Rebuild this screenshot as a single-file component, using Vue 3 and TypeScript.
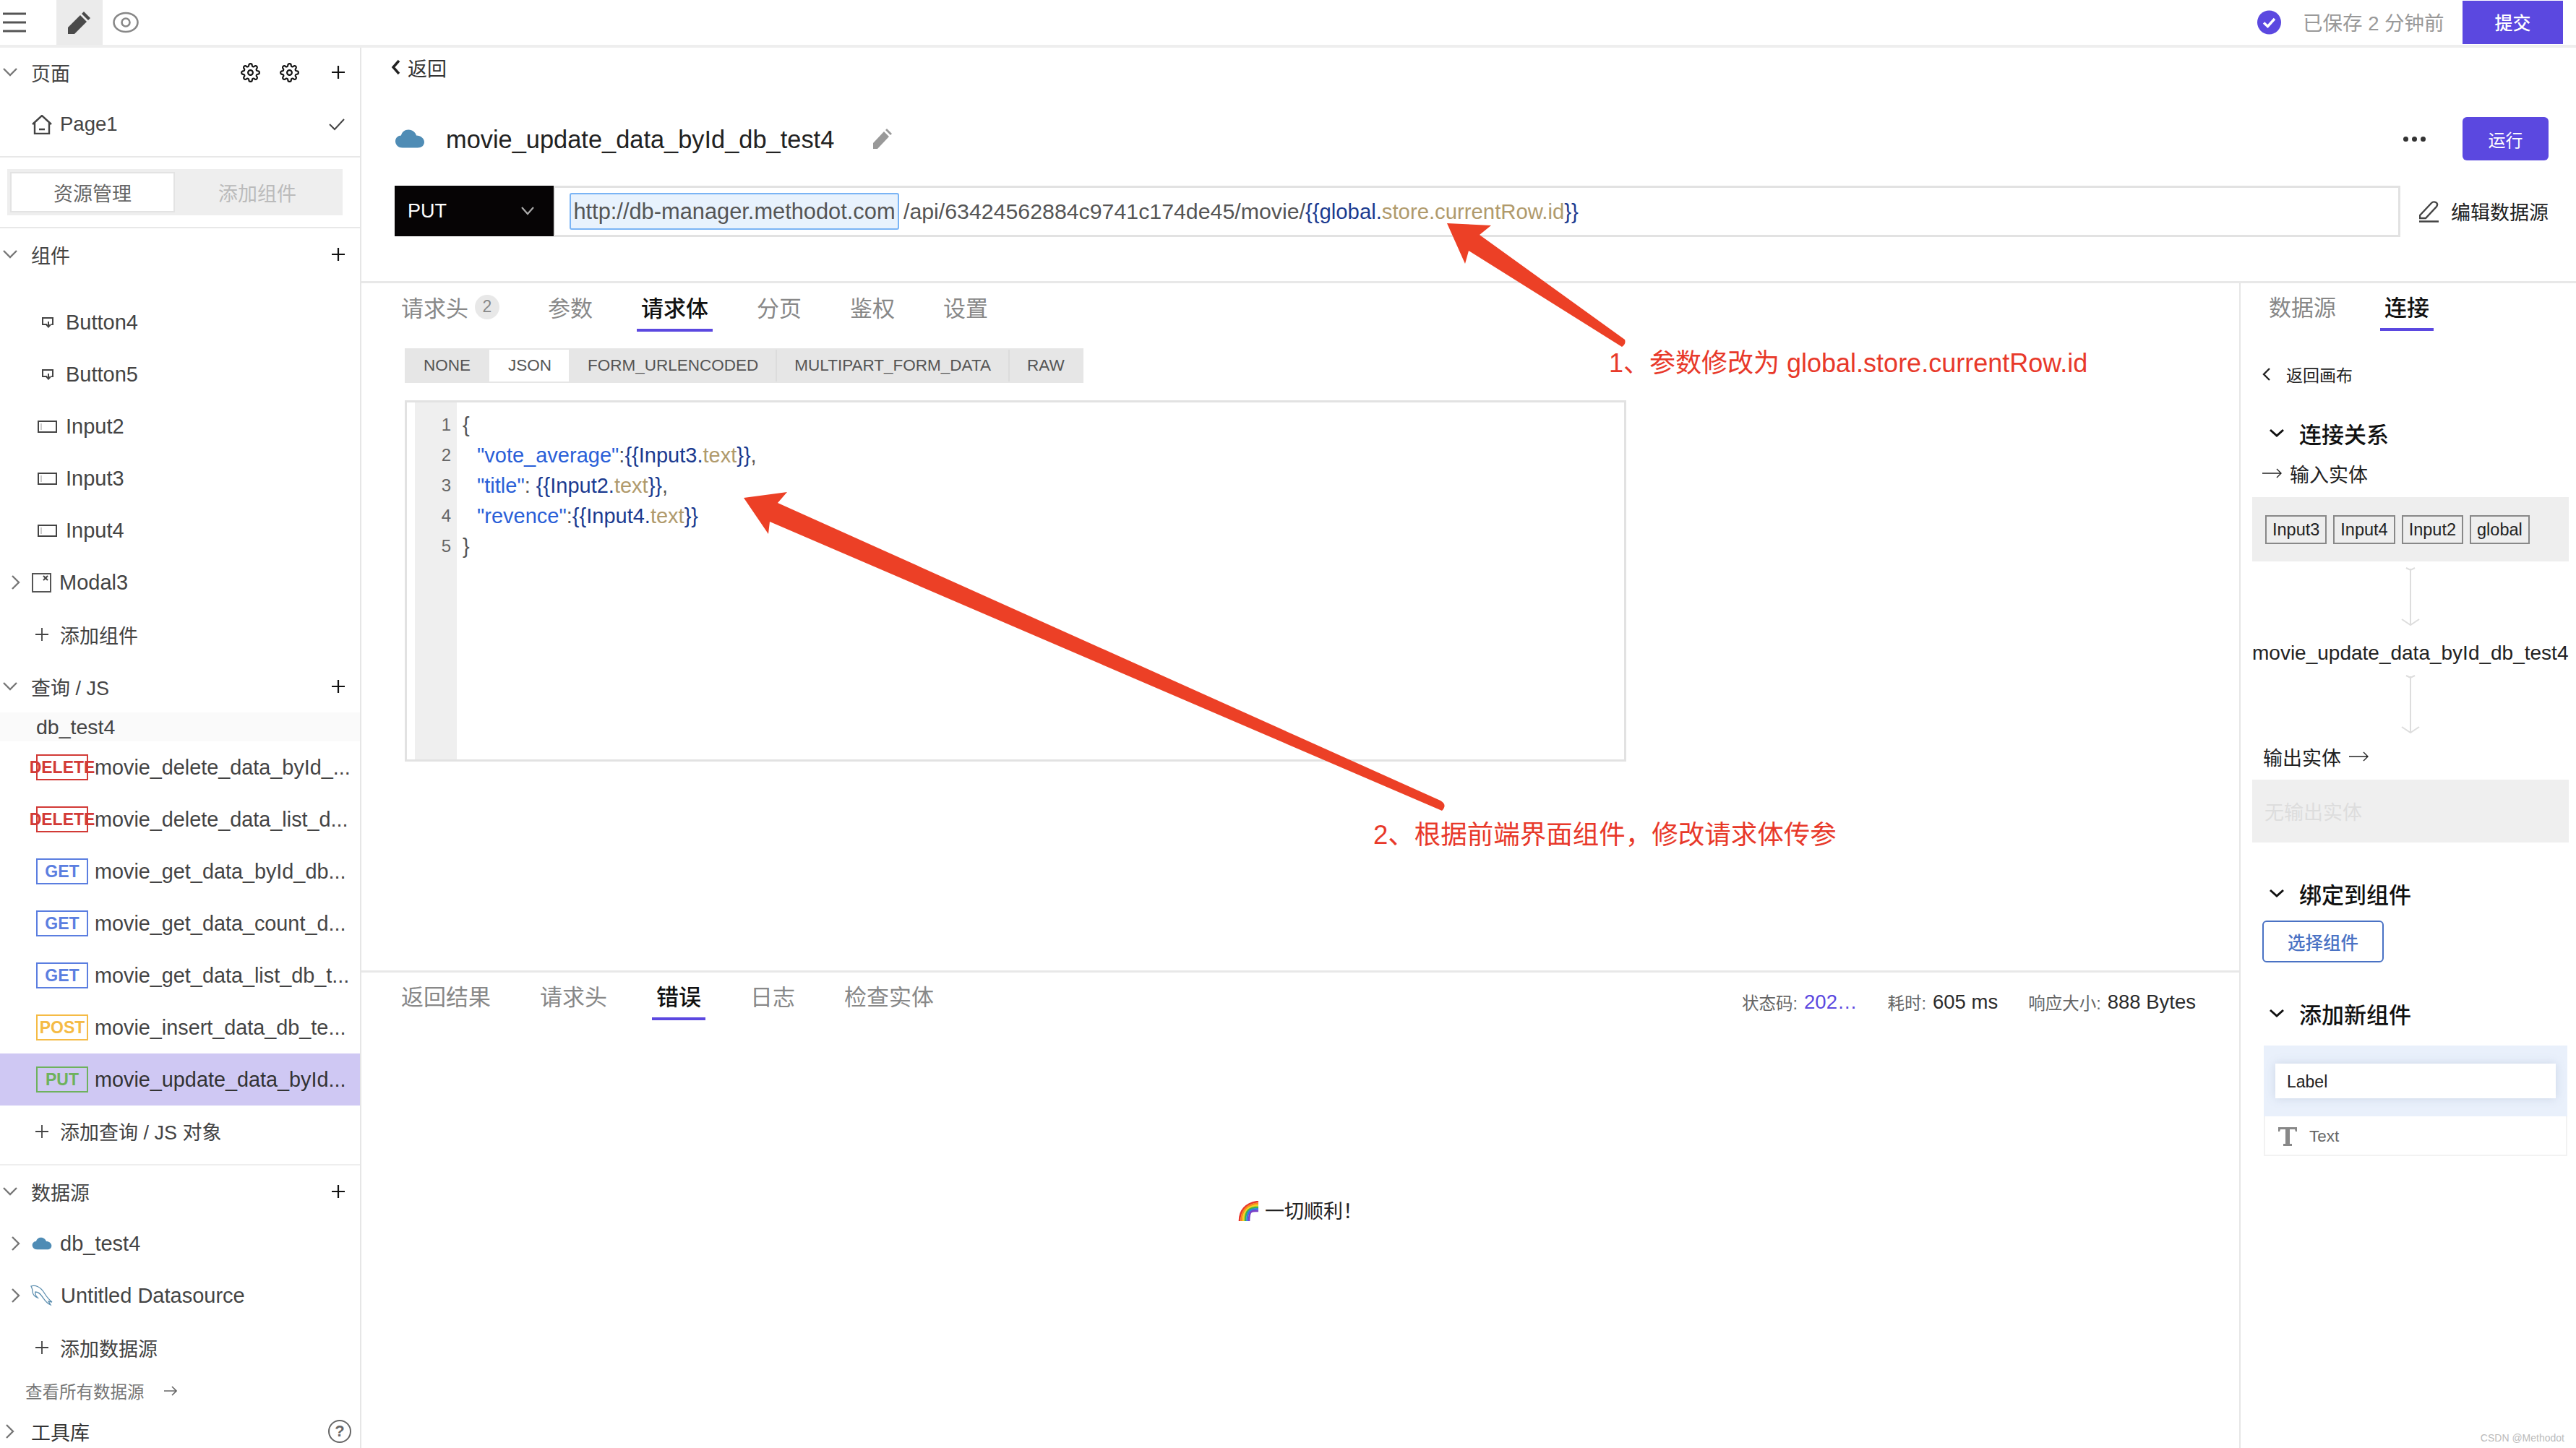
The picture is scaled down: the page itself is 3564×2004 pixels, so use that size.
<script setup lang="ts">
interface Comp { name: string; icon: 'btn' | 'input' }
interface Query { method: string; cls: string; name: string; active?: boolean }
const comps: Comp[] = [
  { name: 'Button4', icon: 'btn' },
  { name: 'Button5', icon: 'btn' },
  { name: 'Input2', icon: 'input' },
  { name: 'Input3', icon: 'input' },
  { name: 'Input4', icon: 'input' },
]
const queries: Query[] = [
  { method: 'DELETE', cls: 'del', name: 'movie_delete_data_byId_...' },
  { method: 'DELETE', cls: 'del', name: 'movie_delete_data_list_d...' },
  { method: 'GET', cls: 'get', name: 'movie_get_data_byId_db...' },
  { method: 'GET', cls: 'get', name: 'movie_get_data_count_d...' },
  { method: 'GET', cls: 'get', name: 'movie_get_data_list_db_t...' },
  { method: 'POST', cls: 'post', name: 'movie_insert_data_db_te...' },
  { method: 'PUT', cls: 'put', name: 'movie_update_data_byId...', active: true },
]
const reqTabs: string[] = ['参数', '请求体', '分页', '鉴权', '设置']
const bodyTypes: string[] = ['NONE', 'JSON', 'FORM_URLENCODED', 'MULTIPART_FORM_DATA', 'RAW']
const resTabs: string[] = ['返回结果', '请求头', '错误', '日志', '检查实体']
const chips: string[] = ['Input3', 'Input4', 'Input2', 'global']
const L = String.fromCharCode(123, 123)
const R = String.fromCharCode(125, 125)
const gear = 'M19.4 15a1.65 1.65 0 0 0 .33 1.82l.06.06a2 2 0 0 1 0 2.83 2 2 0 0 1-2.83 0l-.06-.06a1.65 1.65 0 0 0-1.82-.33 1.65 1.65 0 0 0-1 1.51V21a2 2 0 0 1-2 2 2 2 0 0 1-2-2v-.09A1.65 1.65 0 0 0 9 19.4a1.65 1.65 0 0 0-1.82.33l-.06.06a2 2 0 0 1-2.83 0 2 2 0 0 1 0-2.83l.06-.06a1.65 1.65 0 0 0 .33-1.82 1.65 1.65 0 0 0-1.51-1H3a2 2 0 0 1-2-2 2 2 0 0 1 2-2h.09A1.65 1.65 0 0 0 4.6 9a1.65 1.65 0 0 0-.33-1.82l-.06-.06a2 2 0 0 1 0-2.83 2 2 0 0 1 2.83 0l.06.06a1.65 1.65 0 0 0 1.82.33H9a1.65 1.65 0 0 0 1-1.51V3a2 2 0 0 1 2-2 2 2 0 0 1 2 2v.09a1.65 1.65 0 0 0 1 1.51 1.65 1.65 0 0 0 1.82-.33l.06-.06a2 2 0 0 1 2.83 0 2 2 0 0 1 0 2.83l-.06.06a1.65 1.65 0 0 0-.33 1.82V9a1.65 1.65 0 0 0 1.51 1H21a2 2 0 0 1 2 2 2 2 0 0 1-2 2h-.09a1.65 1.65 0 0 0-1.51 1z'
const cloud = 'M11 26 C4 26 1 21 1 17 C1 12 5 9 9 9 C10 4 14 1 19 1 C25 1 29 5 30 9 C36 9 41 13 41 18 C41 23 37 26 32 26 Z'
const rainbowColors: string[] = ['#e8352b', '#f58a1f', '#f8d21f', '#3fb54a', '#2f7fe0', '#7a3fc8']
</script>

<template>
  <div class="app">
    <header class="topbar">
      <svg class="burger" viewBox="0 0 32 28"><path d="M0 2h32M0 14h32M0 26h32" stroke="#555" stroke-width="3" fill="none" /></svg>
      <div class="edit-tab">
        <svg width="32" height="32" viewBox="0 0 32 32"><path d="M0 32v-9L17 6l9 9L9 32zM19 4l3-3 9 9-3 3z" fill="#4a4a4a" /></svg>
      </div>
      <svg class="eye" width="36" height="30" viewBox="0 0 36 30"><ellipse cx="18" cy="15" rx="16.5" ry="13" fill="none" stroke="#888" stroke-width="2.6" /><circle cx="18" cy="15" r="5.5" fill="none" stroke="#888" stroke-width="2.6" /></svg>
      <div class="top-spacer"></div>
      <svg width="33" height="34" viewBox="0 0 33 34"><circle cx="16.5" cy="17" r="16.5" fill="#5b48e0" /><path d="M9 17.5l5.5 5L24 12" fill="none" stroke="#fff" stroke-width="3.4" /></svg>
      <span class="saved">已保存 2 分钟前</span>
      <button class="submit">提交</button>
    </header>

    <div class="columns">
      <aside class="sidebar">
        <div class="row head first">
          <svg class="chev-d" viewBox="0 0 20 12"><path d="M1 1l9 9 9-9" /></svg>
          <span class="lbl">页面</span>
          <span class="grow"></span>
          <svg class="gear" viewBox="0 0 24 24"><path :d="gear" /><circle cx="12" cy="12" r="3" /></svg>
          <svg class="gear" viewBox="0 0 24 24"><path :d="gear" /><circle cx="12" cy="12" r="3" /></svg>
          <svg class="plus" viewBox="0 0 18 18"><path d="M9 0v18M0 9h18" /></svg>
        </div>
        <div class="row sub">
          <svg class="slot-icon" width="28" height="27" viewBox="0 0 28 27"><path d="M1 13L14 1l13 12M4 11v15h20V11M10 20h8" fill="none" stroke="#444" stroke-width="2.4" /></svg>
          <span class="lbl page-lbl">Page1</span>
          <span class="grow"></span>
          <svg class="check" viewBox="0 0 22 17"><path d="M1 8l7 7L21 1" /></svg>
        </div>
        <div class="seg-wrap">
          <div class="seg">
            <span class="seg-on">资源管理</span>
            <span class="seg-off">添加组件</span>
          </div>
        </div>
        <div class="row head">
          <svg class="chev-d" viewBox="0 0 20 12"><path d="M1 1l9 9 9-9" /></svg>
          <span class="lbl">组件</span>
          <span class="grow"></span>
          <svg class="plus" viewBox="0 0 18 18"><path d="M9 0v18M0 9h18" /></svg>
        </div>
        <div class="comp-list">
          <div v-for="c in comps" :key="c.name" class="row comp">
            <span class="comp-slot">
              <svg v-if="c.icon === 'btn'" class="ic-btn" width="16" height="15" viewBox="0 0 16 15"><path d="M7 10H1V1h14v9h-2M9 6v7M6 10l3 3.5 3-3.5" fill="none" stroke="#444" stroke-width="2" /></svg>
              <svg v-else width="27" height="17" viewBox="0 0 27 17"><rect x="1" y="1" width="25" height="15" fill="none" stroke="#444" stroke-width="2" /><path d="M5 4v9" stroke="#999" stroke-width="1" /></svg>
            </span>
            <span class="lbl lat">{{ c.name }}</span>
          </div>
        </div>
        <div class="row sub">
          <svg class="chev-r" viewBox="0 0 12 20"><path d="M1 1l9 9-9 9" /></svg>
          <svg class="slot-icon" width="27" height="27" viewBox="0 0 27 27"><rect x="1" y="1" width="25" height="25" fill="none" stroke="#555" stroke-width="2" /><path d="M16 4l6 6M22 4l-6 6" stroke="#444" stroke-width="2" /></svg>
          <span class="lbl lat">Modal3</span>
        </div>
        <div class="row add">
          <svg class="add-plus" viewBox="0 0 18 18"><path d="M9 0v18M0 9h18" /></svg>
          <span class="lbl">添加组件</span>
        </div>
        <div class="row head">
          <svg class="chev-d" viewBox="0 0 20 12"><path d="M1 1l9 9 9-9" /></svg>
          <span class="lbl">查询 / JS</span>
          <span class="grow"></span>
          <svg class="plus" viewBox="0 0 18 18"><path d="M9 0v18M0 9h18" /></svg>
        </div>
        <div class="group-name">db_test4</div>
        <div v-for="q in queries" :key="q.name" class="row query" :class="{ active: q.active }">
          <span class="badge" :class="q.cls"><em>{{ q.method }}</em></span>
          <span class="qname">{{ q.name }}</span>
        </div>
        <div class="row add add-q">
          <svg class="add-plus" viewBox="0 0 18 18"><path d="M9 0v18M0 9h18" /></svg>
          <span class="lbl">添加查询 / JS 对象</span>
        </div>
        <div class="row head">
          <svg class="chev-d" viewBox="0 0 20 12"><path d="M1 1l9 9 9-9" /></svg>
          <span class="lbl">数据源</span>
          <span class="grow"></span>
          <svg class="plus" viewBox="0 0 18 18"><path d="M9 0v18M0 9h18" /></svg>
        </div>
        <div class="row sub">
          <svg class="chev-r" viewBox="0 0 12 20"><path d="M1 1l9 9-9 9" /></svg>
          <svg class="slot-icon" width="28" height="18" viewBox="0 0 42 27"><path :d="cloud" fill="#4f8cb5" /></svg>
          <span class="lbl lat">db_test4</span>
        </div>
        <div class="row sub">
          <svg class="chev-r" viewBox="0 0 12 20"><path d="M1 1l9 9-9 9" /></svg>
          <svg class="dolphin" width="32" height="30" viewBox="0 0 32 30"><path d="M1 2c6-2 13 1 18 9 3 5 6 9 11 13l-5-1 3 5c-6-2-9-8-12-12-2-3-5-6-9-6-1 3 1 6 3 8-4-1-7-5-7-9 0-3-1-5-2-7z" fill="none" stroke="#5d8fb0" stroke-width="1.3" /></svg>
          <span class="lbl lat">Untitled Datasource</span>
        </div>
        <div class="row add">
          <svg class="add-plus" viewBox="0 0 18 18"><path d="M9 0v18M0 9h18" /></svg>
          <span class="lbl">添加数据源</span>
        </div>
        <div class="see-all">
          <span>查看所有数据源</span>
          <svg width="18" height="14" viewBox="0 0 18 14"><path d="M0 7h17M11 1l6 6-6 6" fill="none" stroke="#666" stroke-width="1.6" /></svg>
        </div>
        <div class="row tools">
          <svg class="chev-r tool-chev" viewBox="0 0 12 20"><path d="M1 1l9 9-9 9" /></svg>
          <span class="lbl tool-lbl">工具库</span>
          <span class="grow"></span>
          <span class="help">?</span>
        </div>
      </aside>

      <main class="main">
        <section class="top">
          <div class="back">
            <svg width="13" height="22" viewBox="0 0 13 22"><path d="M11 2L3 11l8 9" fill="none" stroke="#222" stroke-width="3.4" /></svg>
            <span>返回</span>
          </div>
          <div class="title-row">
            <svg width="42" height="28" viewBox="0 0 42 27"><path :d="cloud" fill="#4f8cb5" /></svg>
            <h1 class="title">movie_update_data_byId_db_test4</h1>
            <svg width="28" height="28" viewBox="0 0 28 28"><path d="M0 28v-8L15 4l7 7L6 28zM17 2l2-2 7 7-2 2z" fill="#999" /></svg>
            <span class="grow"></span>
            <span class="dots"><i></i><i></i><i></i></span>
            <button class="run">运行</button>
          </div>
          <div class="url-row">
            <div class="method">
              <span>PUT</span>
              <svg width="20" height="12" viewBox="0 0 20 12"><path d="M2 1l8 9 8-9" fill="none" stroke="#aaa" stroke-width="2.2" /></svg>
            </div>
            <div class="url">
              <span class="host">http://db-manager.methodot.com</span>
              <span class="path">/api/63424562884c9741c174de45/movie/<b class="v vars">{{ L }}global.</b><b class="p vars">store.currentRow.id</b><b class="v vars">{{ R }}</b></span>
            </div>
            <div class="edit-ds">
              <svg width="28" height="30" viewBox="0 0 28 30"><path d="M1 20L17 3c2-2 4-2 6-1s3 3 1 6L9 24H1zM0 28.5h27" fill="none" stroke="#444" stroke-width="2.4" /></svg>
              <span>编辑数据源</span>
            </div>
          </div>
        </section>

        <div class="lower">
          <div class="left">
            <section class="req">
              <div class="tabs">
                <div class="tab with-badge"><span>请求头</span><span class="count">2</span></div>
                <div v-for="t in reqTabs" :key="t" class="tab" :class="{ on: t === '请求体' }">{{ t }}</div>
              </div>
              <div class="body-types">
                <span v-for="b in bodyTypes" :key="b" class="btype" :class="{ on: b === 'JSON' }">{{ b }}</span>
              </div>
              <div class="editor">
                <div class="gutter">
                  <span v-for="n in 5" :key="n">{{ n }}</span>
                </div>
                <div class="code">
                  <div>{</div>
                  <div class="ind"><span class="s">"vote_average"</span>:<span class="v">{{ L }}Input3.</span><span class="p">text</span><span class="v">{{ R }}</span>,</div>
                  <div class="ind"><span class="s">"title"</span>: <span class="v">{{ L }}Input2.</span><span class="p">text</span><span class="v">{{ R }}</span>,</div>
                  <div class="ind"><span class="s">"revence"</span>:<span class="v">{{ L }}Input4.</span><span class="p">text</span><span class="v">{{ R }}</span></div>
                  <div>}</div>
                </div>
              </div>
            </section>
            <section class="res">
              <div class="res-head">
                <div class="tabs res-tabs">
                  <div v-for="t in resTabs" :key="t" class="tab" :class="{ on: t === '错误' }">{{ t }}</div>
                </div>
                <div class="meta">
                  <span class="m-item"><span class="m-l">状态码:</span><span class="m-v blue">202…</span></span>
                  <span class="m-item"><span class="m-l">耗时:</span><span class="m-v">605 ms</span></span>
                  <span class="m-item"><span class="m-l">响应大小:</span><span class="m-v">888 Bytes</span></span>
                </div>
              </div>
              <div class="ok">
                <svg width="28" height="28" viewBox="0 0 28 28">
                  <path v-for="(c, i) in rainbowColors" :key="c" :d="`M${2 + i * 2.6} 28C${2 + i * 2.6} 14 ${10 + i * 1.6} ${3 + i * 2} 28 ${1 + i * 2.6}`" fill="none" :stroke="c" stroke-width="2.7" />
                </svg>
                <span>一切顺利！</span>
              </div>
            </section>
          </div>

          <aside class="panel">
            <div class="tabs panel-tabs">
              <div class="tab">数据源</div>
              <div class="tab on">连接</div>
            </div>
            <div class="back-canvas">
              <svg width="12" height="20" viewBox="0 0 12 20"><path d="M10 2L2 10l8 8" fill="none" stroke="#222" stroke-width="2.4" /></svg>
              <span>返回画布</span>
            </div>
            <div class="sec sec-1"><svg viewBox="0 0 22 12"><path d="M2 2l9 8 9-8" /></svg><span>连接关系</span></div>
            <div class="entity ent-in">
              <svg width="27" height="14" viewBox="0 0 27 14"><path d="M0 7h26M20 1l6 6-6 6" fill="none" stroke="#222" stroke-width="1.4" /></svg>
              <span>输入实体</span>
            </div>
            <div class="chips">
              <span v-for="c in chips" :key="c" class="chip">{{ c }}</span>
            </div>
            <div class="flow f1"><svg width="26" height="81" viewBox="0 0 26 81"><path d="M13 2v77M7 1l6 3 6-3M1 72l12 8 12-8" fill="none" stroke="#ddd" stroke-width="2" /></svg></div>
            <div class="q-name">movie_update_data_byId_db_test4</div>
            <div class="flow f2"><svg width="26" height="81" viewBox="0 0 26 81"><path d="M13 2v77M7 1l6 3 6-3M1 72l12 8 12-8" fill="none" stroke="#ddd" stroke-width="2" /></svg></div>
            <div class="entity ent-out">
              <span>输出实体</span>
              <svg width="27" height="14" viewBox="0 0 27 14"><path d="M0 7h26M20 1l6 6-6 6" fill="none" stroke="#222" stroke-width="1.4" /></svg>
            </div>
            <div class="no-out">无输出实体</div>
            <div class="sec sec-2"><svg viewBox="0 0 22 12"><path d="M2 2l9 8 9-8" /></svg><span>绑定到组件</span></div>
            <button class="pick">选择组件</button>
            <div class="sec sec-3"><svg viewBox="0 0 22 12"><path d="M2 2l9 8 9-8" /></svg><span>添加新组件</span></div>
            <div class="new-group"><div class="new-label">Label</div></div>
            <div class="new-item">
              <svg width="26" height="26" viewBox="0 0 26 26"><path d="M0 0h26v6h-2l-1-3h-7v20h3v3H7v-3h3V3H3L2 6H0z" fill="#888" /></svg>
              <span>Text</span>
            </div>
          </aside>
        </div>
      </main>

      <svg class="annot" width="3564" height="2004" viewBox="0 0 3564 2004">
        <path d="M2002 309L2063 312L2047 325L2248 470Q2250 476 2244 480L2032 347L2027 365Z" fill="#ec4026" />
        <path d="M1029 689L1089 681L1076 696L1993 1108Q2003 1114 1995 1122L1065 722L1063 739Z" fill="#ec4026" />
      </svg>
      <div class="note note-1">1、参数修改为 global.store.currentRow.id</div>
      <div class="note note-2">2、根据前端界面组件，修改请求体传参</div>
      <div class="mark">CSDN @Methodot</div>
    </div>
  </div>
</template>

<style scoped>
.app { width: 3564px; height: 2004px; overflow: hidden; background: #fff; display: flex; flex-direction: column; font-family: "Liberation Sans", "Noto Sans CJK SC", sans-serif; font-size: 27px; color: #444; }
.topbar { height: 66px; box-sizing: border-box; border-bottom: 4px solid #eee; display: flex; align-items: center; flex: none; }
.burger { width: 32px; height: 28px; margin-left: 4px; flex: none; }
.edit-tab { width: 64px; height: 62px; margin-left: 42px; background: #ebebeb; display: flex; align-items: center; justify-content: center; }
.eye { margin-left: 14px; }
.top-spacer { flex: 1; }
.saved { margin-left: 30px; color: #999; width: 221px; font-size: 27.5px; padding-bottom: 3px; }
.submit { width: 139px; height: 60px; margin-right: 18px; border: 0; padding: 0 0 3px; background: #5b48e0; color: #fff; font: inherit; font-size: 25px; font-weight: 500; }
.columns { flex: 1; display: flex; position: relative; min-height: 0; }
.sidebar { width: 500px; flex: none; box-sizing: border-box; border-right: 2px solid #e6e6e6; overflow: hidden; }
.row { display: flex; align-items: center; height: 72px; box-sizing: border-box; }
.grow { flex: 1; }
.head { padding: 0 21px 0 4px; }
.head.first { height: 70px; padding-bottom: 2px; }
.head .lbl { margin-left: 19px; }
.chev-d { width: 20px; height: 12px; flex: none; fill: none; stroke: #777; stroke-width: 2.4; }
.chev-r { width: 12px; height: 20px; flex: none; fill: none; stroke: #777; stroke-width: 2.4; margin-left: 16px; }
.gear { width: 27px; height: 27px; fill: none; stroke: #111; stroke-width: 1.9; margin-right: 27px; flex: none; }
.gear + .gear { margin-right: 45px; }
.plus { width: 18px; height: 18px; fill: none; stroke: #111; stroke-width: 2.2; flex: none; }
.sub .slot-icon { margin-left: 16px; flex: none; }
.sub > svg.slot-icon:first-child { margin-left: 44px; }
.sub .lbl { margin-left: 11px; }
.lat { font-size: 29px; }
.page-lbl { font-size: 27.5px; }
.check { width: 22px; height: 17px; fill: none; stroke: #444; stroke-width: 2; margin-right: 21px; }
.seg-wrap { margin-top: 8px; border-top: 2px solid #e8e8e8; border-bottom: 2px solid #e8e8e8; padding: 16px 10px; height: 64px; }
.seg { width: 464px; height: 64px; background: #eee; display: flex; box-sizing: border-box; padding: 4px; }
.seg-on { width: 228px; box-sizing: border-box; background: #fff; border: 2px solid #e3e3e3; display: flex; align-items: center; justify-content: center; color: #666; }
.seg-off { flex: 1; display: flex; align-items: center; justify-content: center; color: #bbb; }
.comp-list { padding-top: 22px; }
.comp-slot { width: 91px; flex: none; display: flex; justify-content: flex-end; align-items: center; padding-right: 12px; box-sizing: border-box; }
.ic-btn { margin-right: 5px; }
.add { padding-left: 49px; }
.add-plus { width: 18px; height: 18px; fill: none; stroke: #444; stroke-width: 1.8; flex: none; }
.add .lbl { margin-left: 16px; }
.group-name { height: 40px; background: #fafafa; padding-left: 50px; line-height: 41px; color: #444; font-size: 28.5px; }
.query { padding-left: 50px; padding-right: 16px; }
.query.active { background: #cfc8f3; }
.badge { width: 72px; height: 36px; box-sizing: border-box; border: 2px solid; flex: none; display: flex; align-items: center; justify-content: center; font-size: 23px; font-weight: 700; }
.badge em { font-style: normal; white-space: nowrap; }
.del { color: #d23a36; border-color: #d23a36; }
.get { color: #5b7ee0; border-color: #5b7ee0; }
.post { color: #f5bb45; border-color: #f5bb45; }
.put { color: #6eb25d; border-color: #6eb25d; }
.qname { margin-left: 9px; white-space: nowrap; font-size: 28.8px; }
.active .qname { color: #333; }
.add-q { height: 83px; padding-bottom: 10px; border-bottom: 2px solid #eee; }
.see-all { height: 48px; display: flex; align-items: center; padding-left: 35px; font-size: 23.5px; color: #777; gap: 27px; }
.tools { height: 64px; padding-right: 12px; }
.tool-chev { margin-left: 8px; }
.tool-lbl { margin-left: 23px; color: #333; }
.help { width: 32px; height: 32px; box-sizing: border-box; border: 2px solid #666; border-radius: 50%; display: flex; align-items: center; justify-content: center; font-size: 22px; font-weight: 700; color: #666; }
.dolphin { margin-left: 14px; flex: none; }
.sub .dolphin + .lbl { margin-left: 10px; }
.main { flex: 1; min-width: 0; display: flex; flex-direction: column; }
.top { height: 326px; flex: none; box-sizing: border-box; border-bottom: 3px solid #e8e8e8; padding: 0 38px 0 46px; }
.back { height: 54px; display: flex; align-items: center; gap: 10px; color: #333; margin-left: -5px; }
.title-row { height: 60px; margin-top: 42px; display: flex; align-items: center; }
.title { margin: 0 54px 0 29px; padding-top: 2px; font-size: 34.4px; font-weight: 400; color: #222; }
.dots { display: flex; gap: 5px; margin-right: 51px; }
.dots i { width: 7px; height: 7px; border-radius: 50%; background: #333; display: block; }
.run { width: 119px; height: 60px; border: 0; border-radius: 6px; background: #5b48e0; color: #fff; font: inherit; font-size: 24px; }
.url-row { height: 71px; margin-top: 35px; display: flex; }
.method { width: 220px; flex: none; height: 70px; background: #060405; color: #fff; display: flex; align-items: center; justify-content: space-between; padding: 0 26px 0 18px; box-sizing: border-box; }
.url { flex: 1; box-sizing: border-box; border: 3px solid #e2e2e2; border-left-width: 2px; display: flex; align-items: center; padding-left: 20px; white-space: nowrap; }
.host { height: 51px; box-sizing: border-box; border: 2px solid #7ab4f5; border-radius: 3px; background: #e8f2fd; display: flex; align-items: center; width: 456px; justify-content: center; color: #555; font-size: 30.8px; }
.path { margin-left: 6px; color: #555; font-size: 30.3px; }
.path b { font-weight: 400; }
.path .vars { font-size: 29.3px; }
.v { color: #1b3a8f; }
.p { color: #b09a6c; }
.s { color: #2a5fd8; }
.edit-ds { width: 205px; flex: none; display: flex; align-items: center; justify-content: flex-end; gap: 16px; color: #222; }
.lower { flex: 1; display: flex; min-height: 0; }
.left { flex: 1; min-width: 0; display: flex; flex-direction: column; }
.req { height: 954px; flex: none; box-sizing: border-box; border-bottom: 3px solid #e8e8e8; padding-left: 60px; }
.tabs { display: flex; gap: 55px; height: 67px; margin-left: -11px; font-size: 31px; color: #888; }
.tab { padding: 2px 6px 0; border-bottom: 4px solid transparent; display: flex; align-items: center; box-sizing: border-box; height: 67px; }
.tab.on { color: #111; border-bottom-color: #5b48e0; font-weight: 500; }
.with-badge { gap: 9px; }
.count { width: 34px; height: 34px; border-radius: 50%; background: #e8e8e8; color: #888; font-size: 23px; display: flex; align-items: center; justify-content: center; }
.body-types { margin-top: 23px; display: inline-flex; height: 48px; background: #e6e6e6; font-size: 22.5px; color: #555; align-items: center; padding-right: 2px; }
.btype { padding: 0 24px; height: 44px; display: flex; align-items: center; box-sizing: border-box; border-left: 2px solid transparent; }
.btype.on { background: #fff; }
.btype:nth-child(4), .btype:nth-child(5) { border-left-color: #dcdcdc; }
.btype:nth-child(2) { margin-left: 2px; }
.editor { display: flex; width: 1690px; height: 500px; margin-top: 24px; box-sizing: border-box; border: 3px solid #e2e2e2; padding-left: 11px; }
.gutter { width: 58px; background: #efefef; display: flex; flex-direction: column; align-items: flex-end; padding: 10px 8px 0 0; box-sizing: border-box; font-size: 24px; color: #666; line-height: 42px; }
.code { padding: 10px 0 0 8px; line-height: 42px; font-size: 29px; color: #555; white-space: nowrap; }
.ind { padding-left: 20px; }
.res { flex: 1; display: flex; flex-direction: column; padding-left: 60px; }
.res-head { display: flex; justify-content: space-between; padding-right: 60px; }
.res-tabs { height: 66px; gap: 56px; }
.res-tabs .tab { height: 66px; padding-top: 0; }
.meta { display: flex; gap: 42px; padding-top: 20px; height: 42px; align-items: center; }
.m-item { display: flex; gap: 9px; align-items: center; }
.m-l { font-size: 23.5px; color: #666; }
.m-v { color: #2b2b2b; font-size: 27.5px; }
.blue { color: #5b48e0; }
.ok { padding-top: 250px; display: flex; justify-content: center; align-items: flex-start; gap: 9px; color: #222; padding-right: 60px; line-height: 30px; }
.panel { width: 466px; flex: none; box-sizing: border-box; border-left: 2px solid #e6e6e6; display: flex; flex-direction: column; color: #222; }
.panel-tabs { margin-left: 33px; height: 66px; flex: none; }
.panel-tabs .tab { height: 66px; padding-top: 0; }
.back-canvas { margin: 40px 0 0 30px; height: 40px; display: flex; align-items: center; gap: 21px; font-size: 23px; flex: none; }
.sec { margin-left: 39px; height: 40px; display: flex; align-items: center; gap: 20px; font-size: 31px; font-weight: 500; color: #111; flex: none; }
.sec svg { width: 22px; height: 12px; fill: none; stroke: #111; stroke-width: 3; flex: none; }
.sec-1 { margin-top: 41px; }
.sec-2 { margin-top: 50px; }
.sec-3 { margin-top: 50px; }
.entity { height: 36px; display: flex; align-items: center; gap: 11px; margin-left: 30px; flex: none; }
.ent-in { margin-top: 18px; }
.ent-out { margin-top: 14px; margin-left: 31px; }
.chips { margin: 15px 10px 0 16px; height: 89px; background: #eee; display: flex; align-items: center; gap: 9px; padding-left: 18px; flex: none; }
.chip { height: 40px; box-sizing: border-box; border: 2px solid #888; font-size: 23.5px; display: flex; align-items: center; padding: 2px 8px 0; }
.flow { margin-left: 222px; height: 81px; flex: none; }
.f1 { margin-top: 8px; }
.f2 { margin-top: 10px; }
.q-name { margin: 18px 0 0 16px; height: 40px; line-height: 40px; white-space: nowrap; flex: none; font-size: 28px; }
.no-out { margin: 14px 10px 0 16px; height: 87px; background: #efefef; color: #ddd; display: flex; align-items: center; padding-left: 17px; flex: none; }
.pick { margin: 18px 0 0 30px; width: 168px; height: 58px; box-sizing: border-box; background: #fff; border: 2px solid #4a72c4; border-radius: 6px; color: #4a72c4; font: inherit; font-size: 24.5px; font-weight: 500; flex: none; }
.new-group { margin: 25px 0 0 32px; width: 420px; height: 98px; box-sizing: border-box; background: #e9f0fb; padding: 25px 16px; flex: none; }
.new-label { height: 48px; background: #fff; box-shadow: 0 0 12px rgba(120, 140, 170, .25); font-size: 23px; display: flex; align-items: center; padding: 2px 0 0 16px; box-sizing: border-box; }
.new-item { margin-left: 32px; width: 420px; height: 55px; box-sizing: border-box; border: 2px solid #f2f2f2; border-top: 0; display: flex; align-items: center; gap: 17px; padding: 2px 0 0 18px; font-size: 22.5px; color: #666; flex: none; }
.annot { position: absolute; left: 0; top: -66px; pointer-events: none; }
.note { position: absolute; color: #e8392a; font-size: 36.5px; white-space: nowrap; line-height: 50px; }
.note-1 { left: 2226px; top: 412px; font-size: 36px; }
.note-2 { left: 1900px; top: 1065px; }
.mark { position: absolute; right: 16px; bottom: 6px; font-size: 14px; color: #bbb; }
</style>
